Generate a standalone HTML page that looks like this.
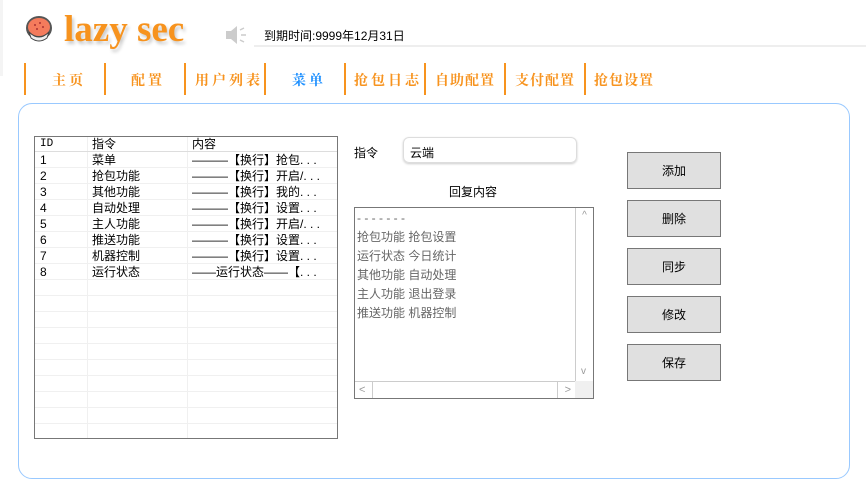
<!DOCTYPE html>
<html><head><meta charset="utf-8"><style>
*{margin:0;padding:0;box-sizing:border-box}
body{width:866px;height:500px;background:#fff;position:relative;overflow:hidden;font-family:"Liberation Sans","Noto Sans CJK SC",sans-serif;font-size:12px;color:#000}
.a{position:absolute}
.logo{left:64px;top:8px;font-family:"Liberation Serif",serif;font-weight:bold;font-size:37px;color:#f7931e;text-shadow:2px 3px 3px #ccc;letter-spacing:0px}
.nav{top:63px;height:32px;width:2px;background:#f7931e}
.nt{top:70px;font-size:14px;font-weight:bold;color:#f7931e;font-family:"Noto Serif CJK SC","Liberation Sans",serif;letter-spacing:3px}
.panel{left:18px;top:103px;width:832px;height:376px;border:1.5px solid #99c9ff;border-radius:14px}
.tbl{left:34px;top:136px;width:304px;height:303px;border:1px solid #777;background:#fff}
.row{position:absolute;left:0;width:302px;height:16px;border-bottom:1px solid #f0f0f0;font-size:12px;line-height:16px}
.row span{position:absolute;top:0;white-space:nowrap}
.btn{left:627px;width:94px;height:37px;background:#e0e0e0;border:1px solid #777;text-align:center;line-height:36px;font-size:12px}
.vl{position:absolute;top:0;width:1px;height:301px;background:#f0f0f0}
</style></head><body>
<svg class="a" style="left:25px;top:14px" width="30" height="32" viewBox="0 0 30 32">
<ellipse cx="14" cy="14" rx="13" ry="12" fill="#555"/>
<ellipse cx="14" cy="13" rx="11" ry="9" fill="#f47b5c"/>
<path d="M4 18 Q14 28 24 18 L22 24 Q14 30 6 24Z" fill="#eee" stroke="#444"/>
<circle cx="10" cy="11" r="1" fill="#a33"/><circle cx="15" cy="9" r="1" fill="#a33"/><circle cx="18" cy="13" r="1" fill="#a33"/><circle cx="12" cy="15" r="1" fill="#a33"/>
</svg>
<div class="a logo">lazy sec</div>
<svg class="a" style="left:226px;top:26px" width="22" height="18" viewBox="0 0 22 18"><path d="M0 5h5l6-5v18l-6-5H0z" fill="#ccc"/><path d="M14 4l4-2M15 9h5M14 14l4 2" stroke="#ccc" stroke-width="1.5"/></svg>
<div class="a" style="left:254px;top:45px;width:612px;height:2px;background:#eee"></div>
<div class="a" style="left:264px;top:27px;font-size:12px">到期时间:9999年12月31日</div>
<div class="a" style="left:0;top:0;width:3px;height:76px;background:#f4f4f4"></div>
<div class="a nav" style="left:24px"></div><div class="a nav" style="left:104px"></div><div class="a nav" style="left:184px"></div><div class="a nav" style="left:264px"></div><div class="a nav" style="left:344px"></div><div class="a nav" style="left:424px"></div><div class="a nav" style="left:504px"></div><div class="a nav" style="left:584px"></div>
<div class="a nt" style="left:52px">主页</div>
<div class="a nt" style="left:131px">配置</div>
<div class="a nt" style="left:195px">用户列表</div>
<div class="a nt" style="left:292px;color:#1e90ff">菜单</div>
<div class="a nt" style="left:354px">抢包日志</div>
<div class="a nt" style="left:435px;letter-spacing:1px">自助配置</div>
<div class="a nt" style="left:515px;letter-spacing:1px">支付配置</div>
<div class="a nt" style="left:594px;letter-spacing:1px">抢包设置</div>
<div class="a panel"></div>
<div class="a tbl">
<div class="vl" style="left:52px"></div><div class="vl" style="left:152px"></div>
<div class="row" style="top:0;height:15px;line-height:15px;border-bottom:1px solid #ddd"><span style="left:5px;font-family:'Liberation Mono',monospace;font-size:11px">ID</span><span style="left:57px">指令</span><span style="left:157px">内容</span></div>
<div class="row" style="top:15px"><span style="left:5px">1</span><span style="left:57px">菜单</span><span style="left:157px">———【换行】抢包. . .</span></div>
<div class="row" style="top:31px"><span style="left:5px">2</span><span style="left:57px">抢包功能</span><span style="left:157px">———【换行】开启/. . .</span></div>
<div class="row" style="top:47px"><span style="left:5px">3</span><span style="left:57px">其他功能</span><span style="left:157px">———【换行】我的. . .</span></div>
<div class="row" style="top:63px"><span style="left:5px">4</span><span style="left:57px">自动处理</span><span style="left:157px">———【换行】设置. . .</span></div>
<div class="row" style="top:79px"><span style="left:5px">5</span><span style="left:57px">主人功能</span><span style="left:157px">———【换行】开启/. . .</span></div>
<div class="row" style="top:95px"><span style="left:5px">6</span><span style="left:57px">推送功能</span><span style="left:157px">———【换行】设置. . .</span></div>
<div class="row" style="top:111px"><span style="left:5px">7</span><span style="left:57px">机器控制</span><span style="left:157px">———【换行】设置. . .</span></div>
<div class="row" style="top:127px"><span style="left:5px">8</span><span style="left:57px">运行状态</span><span style="left:157px">——运行状态——【. . .</span></div>
<div class="row" style="top:143px"></div><div class="row" style="top:159px"></div><div class="row" style="top:175px"></div><div class="row" style="top:191px"></div><div class="row" style="top:207px"></div><div class="row" style="top:223px"></div><div class="row" style="top:239px"></div><div class="row" style="top:255px"></div><div class="row" style="top:271px"></div>
</div>
<div class="a" style="left:354px;top:144px">指令</div>
<div class="a" style="left:403px;top:137px;width:174px;height:26px;border:1px solid #ddd;border-radius:6px;box-shadow:0 1px 2px #ccc;padding:6px 0 0 6px">云端</div>
<div class="a" style="left:449px;top:183px">回复内容</div>
<div class="a" style="left:354px;top:207px;width:240px;height:192px;border:1px solid #777;color:#666;font-size:12px;line-height:19px;padding:1px 0 0 2px">- - - - - - -<br>抢包功能 抢包设置<br>运行状态 今日统计<br>其他功能 自动处理<br>主人功能 退出登录<br>推送功能 机器控制
<div class="a" style="left:220px;top:0;width:18px;height:173px;border-left:1px solid #ccc;color:#999;font-size:10px;text-align:center;line-height:16px">^<div style="position:absolute;top:156px;left:5px">v</div></div>
<div class="a" style="left:0;top:173px;width:220px;height:17px;border-top:1px solid #ccc;color:#999;font-size:11px;line-height:16px;padding-left:4px">&lt;<span style="position:absolute;right:4px;top:0">&gt;</span><div style="position:absolute;left:17px;top:0;width:186px;height:16px;border-left:1px solid #ccc;border-right:1px solid #ccc"></div></div>
<div class="a" style="left:220px;top:173px;width:18px;height:17px;background:#f0f0f0"></div>
</div>
<div class="a btn" style="top:152px">添加</div>
<div class="a btn" style="top:200px">删除</div>
<div class="a btn" style="top:248px">同步</div>
<div class="a btn" style="top:296px">修改</div>
<div class="a btn" style="top:344px">保存</div>
</body></html>
